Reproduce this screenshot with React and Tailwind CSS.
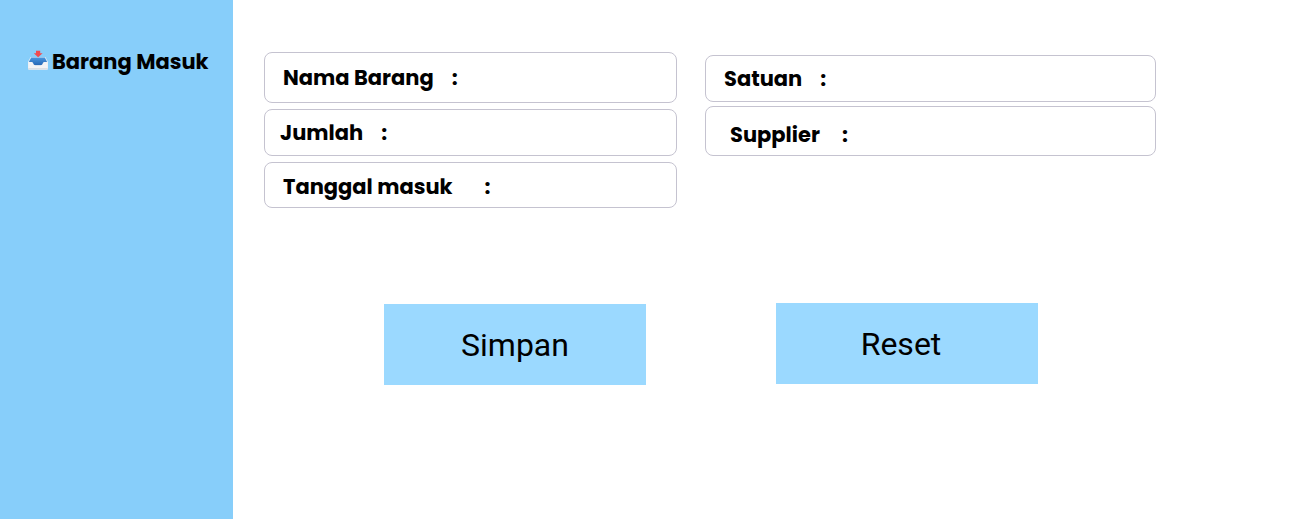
import React from "react";

function InboxIcon() {
  return (
    <svg viewBox="0 0 20 20" className="mb-1 h-5 w-5 shrink-0" aria-hidden="true">
      <defs>
        <linearGradient id="tray" x1="0" y1="0" x2="0" y2="1">
          <stop offset="0" stopColor="#4a97e0" />
          <stop offset="1" stopColor="#2566b4" />
        </linearGradient>
      </defs>
      <path d="M2.6 7h14.8l2.4 4.6v6.9c0 .7-.3 1-1 1H1.2c-.7 0-1-.3-1-1v-6.9z" fill="#e4ecf5" />
      <path d="M3.2 7.4h13.6l2.2 4.4-3.6 3.6H4.6L1 11.8z" fill="url(#tray)" />
      <path d="M.2 12h3.4c1 0 1.3.5 1.7 1.6.4 1.1 1 1.6 2 1.6h5.4c1 0 1.6-.5 2-1.6.4-1.1.7-1.6 1.7-1.6h3.4v6.5c0 .7-.3 1-1 1H1.2c-.7 0-1-.3-1-1z" fill="#f3f3f5" />
      <path d="M.2 18h19.6v.5c0 .7-.3 1-1 1H1.2c-.7 0-1-.3-1-1z" fill="#dcdfe4" />
      <path d="M8 .8h4.2v2.5h2.4L10.1 7.2 5.8 3.3H8z" fill="#f04b50" />
    </svg>
  );
}

function Field({ id, label, className, gap = "gap-[18px]" }) {
  return (
    <div className={`flex items-center rounded-lg border border-[#c5c3d0] bg-white pr-4 ${className}`}>
      <label htmlFor={id} className={`flex shrink-0 text-[21px] leading-7 font-bold ${gap}`}>
        <span>{label}</span>
        <span>:</span>
      </label>
      <input id={id} name={id} type="text" className="ml-3 h-8 min-w-0 flex-1 bg-transparent text-lg outline-none" />
    </div>
  );
}

export default function App() {
  const button =
    "h-[81px] w-[262px] bg-[#9bd9ff] font-['Roboto',sans-serif] text-[32px] leading-10 hover:bg-[#87cefa]";
  return (
    <div className="flex min-h-screen bg-white font-['Poppins','Inter',sans-serif] text-black">
      <aside className="w-[233px] shrink-0 bg-[#87cefa] pt-12 pl-7">
        <h1 className="flex items-center gap-1 text-[21px] leading-7 font-bold whitespace-nowrap">
          <InboxIcon />
          Barang Masuk
        </h1>
      </aside>
      <main className="min-w-0 flex-1 pt-[52px] pr-[135px] pl-[31px]">
        <form>
          <div className="grid grid-cols-[minmax(0,413fr)_minmax(0,451fr)] gap-7">
            <div className="flex flex-col gap-1.5">
              <Field id="nama" label="Nama Barang" className="h-[51px] pl-[18px]" />
              <Field id="jumlah" label="Jumlah" className="h-[47px] pl-[15px]" />
              <Field id="tanggal" label="Tanggal masuk" className="h-[46px] pt-1 pl-[18px]" gap="gap-8" />
            </div>
            <div className="flex flex-col gap-1 pt-[3px]">
              <Field id="satuan" label="Satuan" className="h-[47px] pl-[18px]" />
              <Field id="supplier" label="Supplier" className="h-[50px] pt-2 pl-6" gap="gap-[22px]" />
            </div>
          </div>
          <div className="mt-[95px] flex items-start gap-[130px] pl-[120px]">
            <button type="submit" className={`mt-px ${button}`}>Simpan</button>
            <button type="reset" className={`pr-3 ${button}`}>Reset</button>
          </div>
        </form>
      </main>
    </div>
  );
}
